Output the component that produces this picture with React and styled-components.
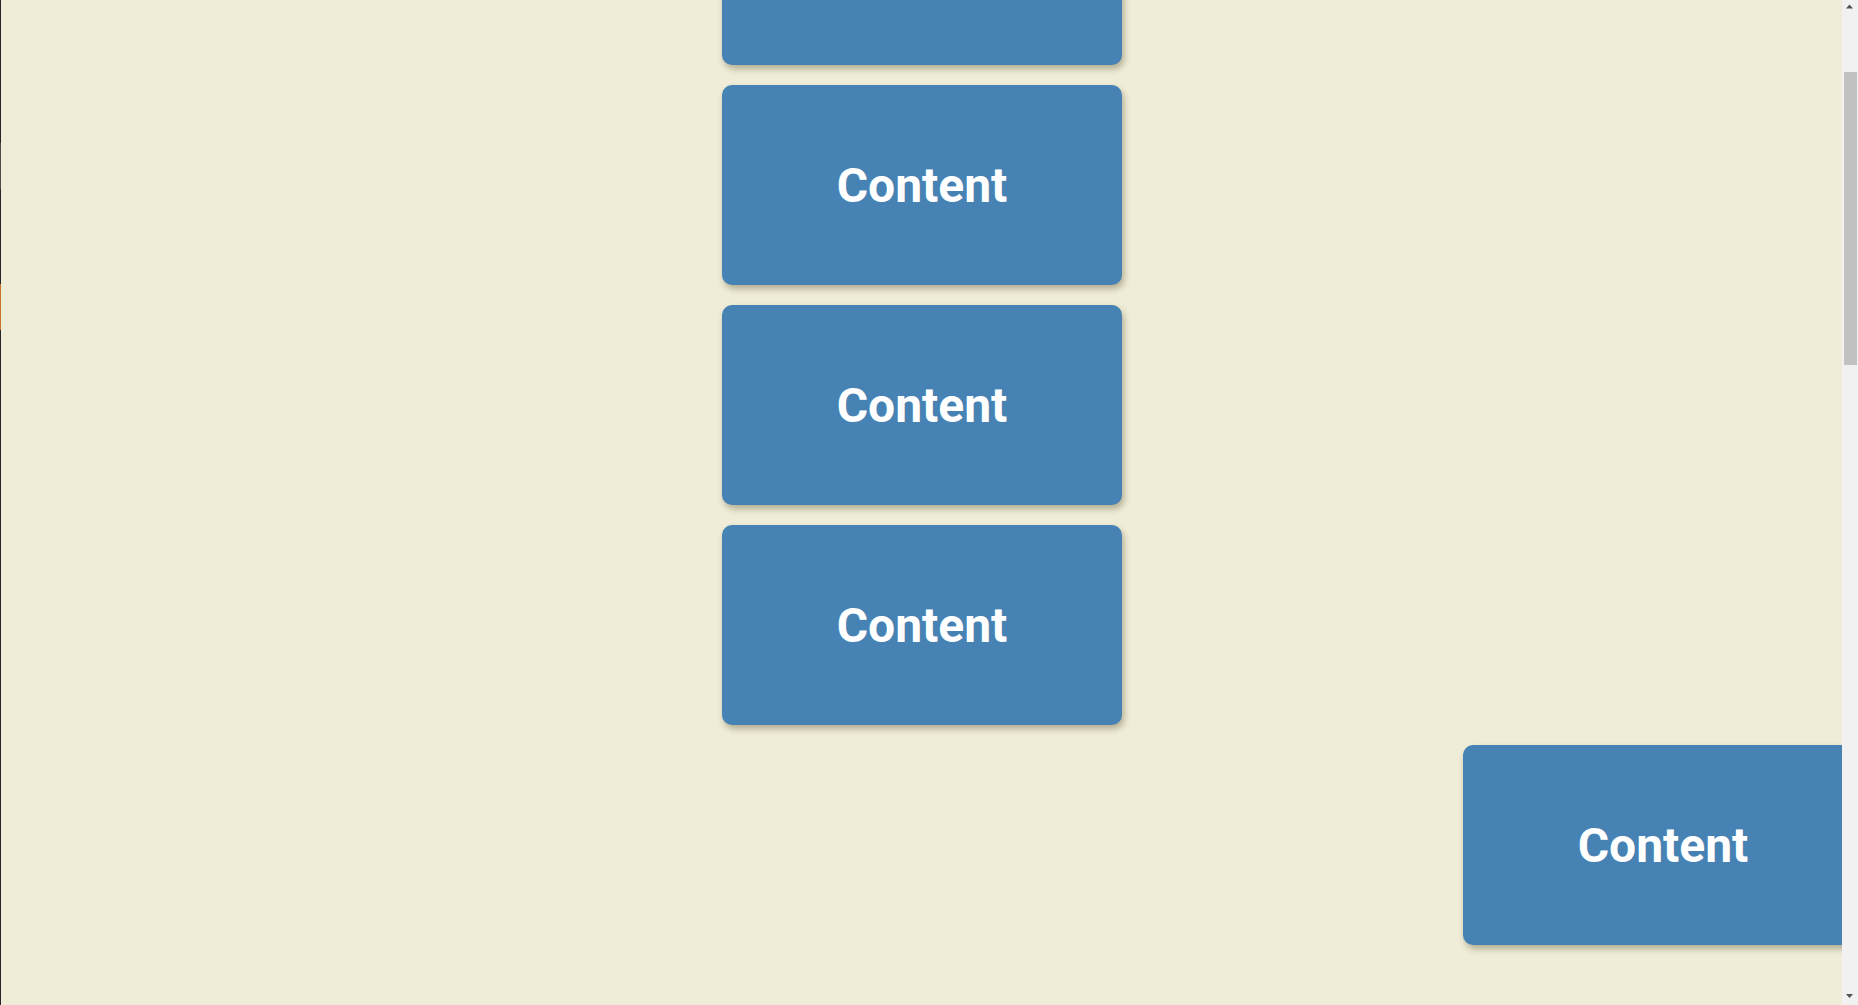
import { useLayoutEffect, useRef } from "react";
import styled, { createGlobalStyle } from "styled-components";

const GlobalStyle = createGlobalStyle`
  html, body {
    margin: 0;
    height: 100%;
    overflow: hidden;
    background: #efecd7;
    font-family: Roboto, "Liberation Sans", Arial, sans-serif;
  }
`;

// how far each card has slid in from the right; later ones are still hidden
const cards = [
  { shift: 0 },
  { shift: 0 },
  { shift: 0 },
  { shift: 0 },
  { shift: 741 },
  ...Array.from({ length: 10 }, () => ({ shift: 900, hidden: true })),
];

const App = () => {
  const viewRef = useRef(null);

  useLayoutEffect(() => {
    if (viewRef.current) viewRef.current.scrollTop = 192;
  }, []);

  return (
    <>
      <GlobalStyle />
      <Window>
        <EdgeStrip>
          <EdgeMark $gap={143} $color="#4d4d4f" />
          <EdgeMark $gap={95} $color="#c8722c" />
        </EdgeStrip>
        <Viewport ref={viewRef}>
          <CardColumn>
            {cards.map((c, i) => (
              <Card key={i} $shift={c.shift} $hidden={c.hidden}>
                Content
              </Card>
            ))}
          </CardColumn>
        </Viewport>
        <ScrollRail>
          <ArrowButton>
            <svg width="16" height="16" viewBox="0 0 16 16">
              <path d="M4 8.5 L7.5 4.5 L11 8.5 Z" fill="#505050" />
            </svg>
          </ArrowButton>
          <Track>
            <Thumb />
          </Track>
          <ArrowButton>
            <svg width="16" height="16" viewBox="0 0 16 16">
              <path d="M4 5 L7.5 9 L11 5 Z" fill="#505050" />
            </svg>
          </ArrowButton>
        </ScrollRail>
      </Window>
    </>
  );
};

export default App;

const Window = styled.div`
  display: flex;
  height: 100vh;
  width: 100%;
`;

const EdgeStrip = styled.div`
  width: 1px;
  flex-shrink: 0;
  display: flex;
  flex-direction: column;
  background: #25262a;
`;

const EdgeMark = styled.div`
  margin-top: ${(p) => p.$gap}px;
  height: 46px;
  background: ${(p) => p.$color};
`;

const Viewport = styled.div`
  flex: 1;
  height: 100%;
  overflow: hidden;
  margin-left: -1px;
`;

const CardColumn = styled.main`
  display: flex;
  flex-direction: column;
  align-items: center;
  gap: 20px;
  padding: 57px 0 0 2px;
`;

const Card = styled.div`
  width: 400px;
  height: 200px;
  flex-shrink: 0;
  display: flex;
  align-items: center;
  justify-content: center;
  background: #4682b4;
  border-radius: 10px;
  box-shadow: 2px 4px 6px rgba(70, 60, 30, 0.35);
  color: #ffffff;
  font-size: 48px;
  font-weight: 700;
  transform: translateX(${(p) => p.$shift}px);
  opacity: ${(p) => (p.$hidden ? 0 : 1)};
`;

const ScrollRail = styled.div`
  width: 16px;
  flex-shrink: 0;
  display: flex;
  flex-direction: column;
  background: #f1f1f1;
`;

const ArrowButton = styled.div`
  height: 16px;
  display: flex;
  align-items: center;
  justify-content: center;

  svg {
    display: block;
  }
`;

const Track = styled.div`
  flex: 1;
  padding: 56px 1px 0 2px;
`;

const Thumb = styled.div`
  height: 293px;
  background: #c1c1c1;
`;
